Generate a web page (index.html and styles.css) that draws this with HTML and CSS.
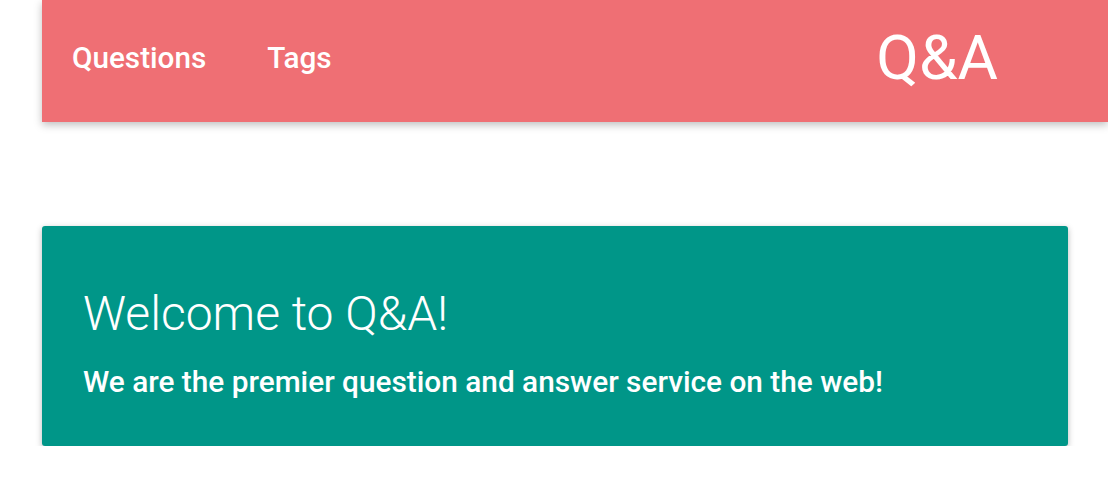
FILE: index.html
```html
<!DOCTYPE html>
<html>
<head>
<meta charset="utf-8">
<link rel="stylesheet" href="styles.css">
</head>
<body>
<header class="topbar">
  <nav class="nav">
    <a class="nav-link" href="#">Questions</a>
    <a class="nav-link" href="#">Tags</a>
  </nav>
  <div class="brand">Q&amp;A</div>
</header>
<main class="content">
  <section class="hero">
    <h1 class="hero-title">Welcome to Q&amp;A!</h1>
    <p class="hero-sub">We are the premier question and answer service on the web!</p>
  </section>
</main>
</body>
</html>
```
FILE: styles.css
```css
html, body {
  margin: 0;
  padding: 0;
  background: #fff;
}
body {
  font-family: Roboto, "Liberation Sans", sans-serif;
  padding-left: 42px;
  overflow: hidden;
}
.topbar {
  height: 122px;
  box-sizing: border-box;
  padding: 0 0 8px 30px;
  background: #ef6f74;
  display: flex;
  align-items: center;
  box-shadow: 0 3px 8px rgba(0,0,0,0.25);
  position: relative;
}
.nav {
  display: flex;
  gap: 61px;
}
.nav-link {
  color: #fff;
  text-decoration: none;
  font-size: 29.7px;
  font-weight: 500;
}
.brand {
  margin-left: auto;
  margin-right: 110px;
  color: #fff;
  font-size: 62px;
  font-weight: 400;
}
.content {
  padding: 104px 40px 0 0;
}
.hero {
  background: #009688;
  border-radius: 3px;
  height: 220px;
  box-sizing: border-box;
  padding: 60px 41px 0;
  box-shadow: 0 2px 6px rgba(0,0,0,0.28);
  color: #fff;
}
.hero-title {
  margin: 0;
  font-size: 48px;
  font-weight: 300;
  line-height: 56px;
}
.hero-sub {
  margin: 23px 0 0;
  font-size: 29.8px;
  font-weight: 500;
  line-height: 34px;
}
```
